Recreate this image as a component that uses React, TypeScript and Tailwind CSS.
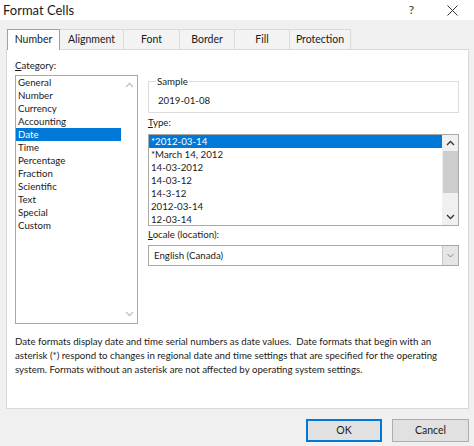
import React from 'react';

const categories = [
  'General',
  'Number',
  'Currency',
  'Accounting',
  'Date',
  'Time',
  'Percentage',
  'Fraction',
  'Scientific',
  'Text',
  'Special',
  'Custom',
];

const types = ['*2012-03-14', '*March 14, 2012', '14-03-2012', '14-03-12', '14-3-12', '2012-03-14', '12-03-14'];

const tabs = ['Number', 'Alignment', 'Font', 'Border', 'Fill', 'Protection'];
const tabWidths = ['w-[53px]', 'w-[64px]', 'w-[56px]', 'w-[55px]', 'w-[55px]', 'w-[61px]'];

function Chevron({ up, color = '#333' }: { up?: boolean; color?: string }) {
  return (
    <svg width="9" height="6" viewBox="0 0 9 6" fill="none">
      <path d={up ? 'M1 5 L4.5 1.5 L8 5' : 'M1 1 L4.5 4.5 L8 1'} stroke={color} strokeWidth="1.3" />
    </svg>
  );
}

export default function App() {
  return (
    <div className="w-[474px] h-[446px] bg-[#f0f0f0] flex flex-col font-['Lato','Noto_Sans',sans-serif] text-[9.7px] text-[#1a1a1a] overflow-hidden">
      {/* title bar */}
      <div className="h-[20px] bg-white flex items-center justify-between shrink-0">
        <span className="pl-[3px] text-[13px] leading-none">Format Cells</span>
        <div className="flex items-center gap-[33px] pr-[16px]">
          <span className="text-[12px] leading-none text-[#333]">?</span>
          <svg width="11" height="11" viewBox="0 0 11 11">
            <path d="M0.5 0.5 L10.5 10.5 M10.5 0.5 L0.5 10.5" stroke="#333" strokeWidth="1" />
          </svg>
        </div>
      </div>

      {/* tabs */}
      <div className="flex items-end pl-[7px] pt-[9px] h-[30px] shrink-0 relative z-10">
        {tabs.map((t, i) =>
          i === 0 ? (
            <div
              key={t}
              className={`${tabWidths[i]} h-[21px] bg-white border border-[#a0a0a0] border-b-0 flex items-center justify-center text-[10.5px]`}
            >
              {t}
            </div>
          ) : (
            <div
              key={t}
              className={`${tabWidths[i]} h-[20px] mb-[1px] bg-[#f3f3f3] border-r border-t border-[#dadada] flex items-center justify-center text-[10.5px]`}
            >
              {t}
            </div>
          )
        )}
      </div>

      {/* panel */}
      <div className="ml-[6px] mr-[5px] h-[360px] -mt-[1px] bg-white border border-[#d9d9d9] pl-[8px] pt-[9px] shrink-0">
        <div className="flex gap-[10px]">
          {/* category */}
          <div className="w-[123px] flex flex-col">
            <div className="h-[13px] leading-[13px]">
              <span className="underline">C</span>ategory:
            </div>
            <div className="mt-[3px] h-[249px] border border-[#a9a9a9] flex">
              <div className="flex-1 flex flex-col">
                {categories.map((c) => (
                  <div
                    key={c}
                    className={`h-[13px] leading-[13px] pl-[2px] ${c === 'Date' ? 'bg-[#0078d7] text-white' : ''}`}
                  >
                    {c}
                  </div>
                ))}
              </div>
              <div className="w-[16px] flex flex-col justify-between items-center py-[6px]">
                <Chevron up color="#c2c2c2" />
                <Chevron color="#c2c2c2" />
              </div>
            </div>
          </div>

          {/* right column */}
          <div className="w-[311px] flex flex-col pt-[16px]">
            <fieldset className="border border-[#dcdcdc] pl-[9px] pb-[3px] h-[38px]">
              <legend className="px-[1px] -ml-[2px] leading-[13px]">Sample</legend>
              <div className="pt-[6px] leading-[13px]">2019-01-08</div>
            </fieldset>

            <div className="mt-[3px] h-[13px] leading-[13px]">
              <span className="underline">T</span>ype:
            </div>
            <div className="mt-[5px] h-[92px] border border-[#a9a9a9] flex overflow-hidden">
              <div className="flex-1 flex flex-col">
                {types.map((t, i) => (
                  <div key={t} className={`h-[13px] leading-[13px] pl-[2px] ${i === 0 ? 'bg-[#0078d7] text-white' : ''}`}>
                    {t}
                  </div>
                ))}
              </div>
              <div className="w-[16px] bg-[#f0f0f0] flex flex-col items-center">
                <div className="h-[16px] flex items-center">
                  <Chevron up />
                </div>
                <div className="w-[15px] h-[42px] bg-[#cdcdcd]" />
                <div className="flex-1" />
                <div className="h-[16px] flex items-center">
                  <Chevron />
                </div>
              </div>
            </div>

            <div className="mt-[2px] h-[13px] leading-[13px]">
              <span className="underline">L</span>ocale (location):
            </div>
            <div className="mt-[4px] h-[21px] border border-[#a9a9a9] flex items-stretch">
              <div className="flex-1 flex items-center pl-[5px]">English (Canada)</div>
              <div className="w-[16px] bg-[#e5e5e5] border-l border-[#c8c8c8] flex items-center justify-center">
                <svg width="7" height="5" viewBox="0 0 7 5" fill="none">
                  <path d="M0.5 1 L3.5 4 L6.5 1" stroke="#888" strokeWidth="1" />
                </svg>
              </div>
            </div>
          </div>
        </div>

        {/* description */}
        <div className="mt-[10px] leading-[14px]">
          <div>Date formats display date and time serial numbers as date values.&nbsp; Date formats that begin with an</div>
          <div>asterisk (*) respond to changes in regional date and time settings that are specified for the operating</div>
          <div>system. Formats without an asterisk are not affected by operating system settings.</div>
        </div>
      </div>

      {/* buttons */}
      <div className="flex justify-end gap-[10px] pr-[5px] mt-[10px]">
        <button className="w-[76px] h-[23px] bg-[#e1e1e1] border-2 border-[#0078d7] text-[10.5px]">OK</button>
        <button className="w-[77px] h-[23px] bg-[#e1e1e1] border border-[#adadad] text-[10.5px]">Cancel</button>
      </div>
    </div>
  );
}
